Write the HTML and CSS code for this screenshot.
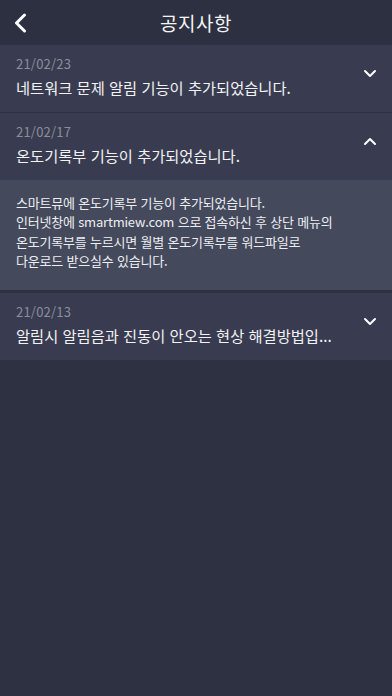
FILE: index.html
```html
<!DOCTYPE html>
<html lang="ko">
<head>
<meta charset="utf-8">
<link rel="stylesheet" href="styles.css">
</head>
<body>
<div class="app">
  <header class="topbar">
    <button class="back" aria-label="뒤로">
      <svg width="14" height="20" viewBox="0 0 14 20"><path d="M11.5 2 L3.5 10 L11.5 18" fill="none" stroke="#fff" stroke-width="3" stroke-linecap="round" stroke-linejoin="round"/></svg>
    </button>
    <h1 class="title">공지사항</h1>
  </header>
  <ul class="list">
    <li class="item">
      <div class="row">
        <div class="texts">
          <div class="date">21/02/23</div>
          <div class="subject">네트워크 문제 알림 기능이 추가되었습니다.</div>
        </div>
        <svg class="chev" width="14" height="9" viewBox="0 0 14 9"><path d="M2 2 L7 7 L12 2" fill="none" stroke="#fff" stroke-width="2" stroke-linecap="round" stroke-linejoin="round"/></svg>
      </div>
    </li>
    <li class="item open">
      <div class="row">
        <div class="texts">
          <div class="date">21/02/17</div>
          <div class="subject">온도기록부 기능이 추가되었습니다.</div>
        </div>
        <svg class="chev" width="14" height="9" viewBox="0 0 14 9"><path d="M2 7 L7 2 L12 7" fill="none" stroke="#fff" stroke-width="2" stroke-linecap="round" stroke-linejoin="round"/></svg>
      </div>
      <div class="body">스마트뮤에 온도기록부 기능이 추가되었습니다.<br>인터넷창에 smartmiew.com 으로 접속하신 후 상단 메뉴의<br>온도기록부를 누르시면 월별 온도기록부를 워드파일로<br>다운로드 받으실수 있습니다.</div>
    </li>
    <li class="item">
      <div class="row">
        <div class="texts">
          <div class="date">21/02/13</div>
          <div class="subject">알림시 알림음과 진동이 안오는 현상 해결방법입...</div>
        </div>
        <svg class="chev" width="14" height="9" viewBox="0 0 14 9"><path d="M2 2 L7 7 L12 2" fill="none" stroke="#fff" stroke-width="2" stroke-linecap="round" stroke-linejoin="round"/></svg>
      </div>
    </li>
  </ul>
</div>
</body>
</html>
```
FILE: styles.css
```css
* { box-sizing: border-box; }
html, body { margin: 0; padding: 0; }
body {
  background: #2e3142;
  font-family: "Noto Sans CJK KR", "Noto Sans", sans-serif;
  color: #f2f2f4;
}
.app { width: 392px; min-height: 696px; background: #2e3142; }
.topbar {
  height: 45px;
  display: flex;
  align-items: center;
  justify-content: center;
  position: relative;
  background: #2d3040;
}
.back {
  position: absolute;
  left: 13px;
  top: 13px;
  padding: 0;
  border: 0;
  background: none;
  display: flex;
}
.title {
  margin: 0;
  font-size: 19px;
  font-weight: 400;
  color: #f4f4f6;
  letter-spacing: 0.5px;
}
.list { list-style: none; margin: 0; padding: 0; }
.item { background: #393c50; }
.item + .item { margin-top: 1px; }
.item.open + .item { margin-top: 3px; }
.row {
  display: flex;
  align-items: center;
  padding: 10px 15px 14px 16px;
}
.texts { flex: 1; min-width: 0; }
.date {
  font-size: 13px;
  line-height: 18px;
  color: #8b8e9c;
  letter-spacing: 0.2px;
}
.subject {
  margin-top: 3px;
  font-size: 15.3px;
  line-height: 22px;
  color: #f2f2f4;
  letter-spacing: 0;
  white-space: nowrap;
}
.chev { flex: none; margin-top: -6px; }
.body {
  background: #45495c;
  padding: 13px 16px 19px;
  font-size: 13px;
  line-height: 19.4px;
  color: #eceef2;
  letter-spacing: -0.2px;
}
```
